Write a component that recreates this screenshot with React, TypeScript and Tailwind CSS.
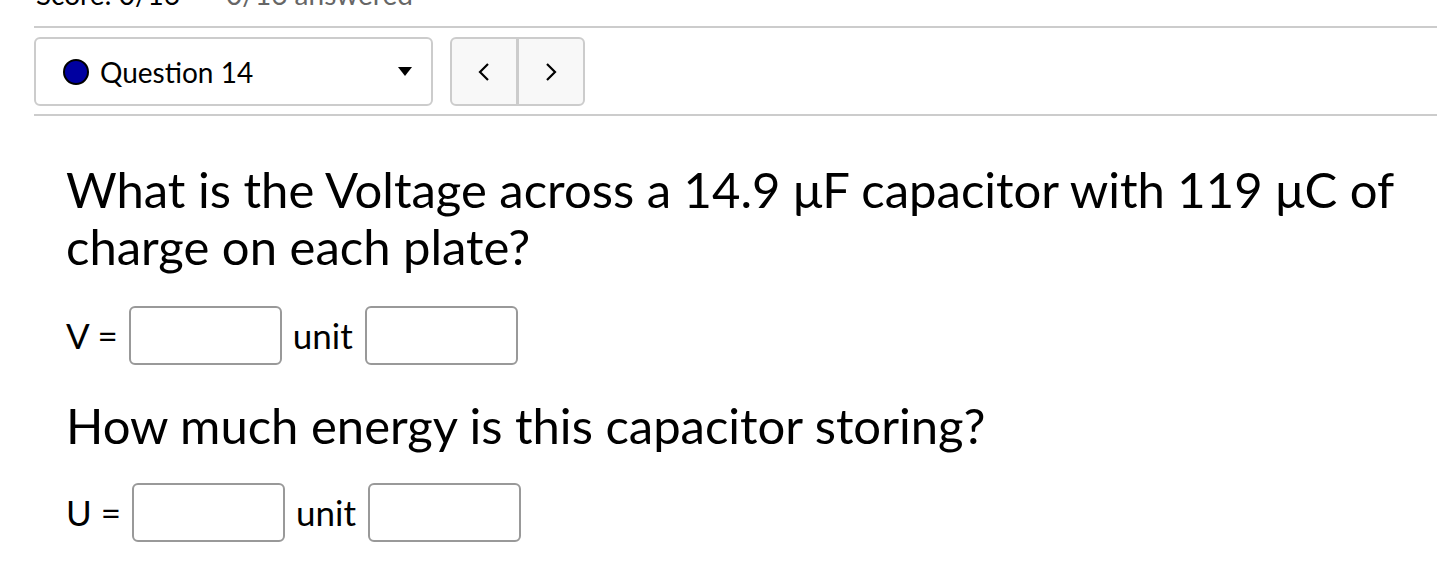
import React from "react";

function Field({ label }: { label: string }) {
  return (
    <div className="flex items-center text-[35px] leading-none text-black">
      <span>{label} =</span>
      <div className="ml-[11px] w-[153px] h-[59px] border-2 border-[#999] rounded-[6px] bg-white" />
      <span className="ml-[11px] mr-[12px]">unit</span>
      <div className="w-[153px] h-[59px] border-2 border-[#999] rounded-[6px] bg-white" />
    </div>
  );
}

export default function App() {
  return (
    <div className="w-[1437px] h-[572px] overflow-hidden bg-white font-['Lato',sans-serif] text-black">
      <div className="pl-[34px]">
        <div className="h-[26px] overflow-hidden relative">
          <div className="absolute left-[2px] top-[-21px] flex gap-[46px] text-[28px] leading-[30px] whitespace-nowrap">
            <span className="text-black">Score: 0/16</span>
            <span className="text-[#666]">0/16 answered</span>
          </div>
        </div>
        <div className="h-[2px] bg-[#ccc]" />
        <div className="mt-[9px] flex items-stretch gap-[17px]">
          <div className="w-[399px] h-[69px] border-2 border-[#ccc] rounded-[6px] flex items-center pl-[27px] pr-[19px] bg-white">
            <span className="w-[26px] h-[26px] rounded-full border-2 border-black bg-[#0000a0]" />
            <span className="ml-[11px] text-[28px] leading-none">Question 14</span>
            <span className="ml-auto">
              <svg width="14" height="9" viewBox="0 0 14 9">
                <polygon points="0,0 14,0 7,9" fill="#000" />
              </svg>
            </span>
          </div>
          <div className="w-[135px] h-[69px] border-2 border-[#ccc] rounded-[6px] flex bg-[#f8f8f8] overflow-hidden">
            <div className="flex-1 flex items-center justify-center">
              <svg width="12" height="18" viewBox="0 0 12 18">
                <polyline points="10,1 2,9 10,17" fill="none" stroke="#000" strokeWidth="2.2" />
              </svg>
            </div>
            <div className="w-[3px] bg-[#ccc]" />
            <div className="flex-1 flex items-center justify-center">
              <svg width="12" height="18" viewBox="0 0 12 18">
                <polyline points="2,1 10,9 2,17" fill="none" stroke="#000" strokeWidth="2.2" />
              </svg>
            </div>
          </div>
        </div>
        <div className="mt-[8px] h-[2px] bg-[#ccc]" />
        <div className="pl-[32px] pt-[45px]">
          <p className="text-[49px] leading-[57px] pr-[20px]">
            What is the Voltage across a 14.9 μF capacitor with 119 μC of charge on each plate?
          </p>
          <div className="mt-[31px]">
            <Field label="V" />
          </div>
          <p className="mt-[32px] text-[49px] leading-[57px]">How much energy is this capacitor storing?</p>
          <div className="mt-[29px]">
            <Field label="U" />
          </div>
        </div>
      </div>
    </div>
  );
}
